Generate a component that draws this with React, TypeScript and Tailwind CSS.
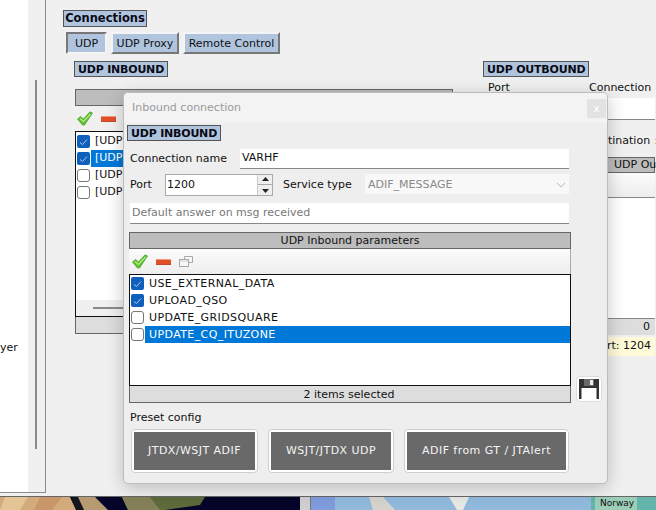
import React from "react";

const font = { fontFamily: '"DejaVu Sans", sans-serif' };

function Label({ children, className = "" }: { children: React.ReactNode; className?: string }) {
  return (
    <div className={`w-fit h-4 flex items-center px-[3px] bg-[#b0c4de] border border-[#555] font-bold text-[11px] tracking-[-0.2px] leading-none text-[#0a0a14] ${className}`}>
      {children}
    </div>
  );
}

function Tab({ children, active, className = "" }: { children: React.ReactNode; active?: boolean; className?: string }) {
  return (
    <div
      className={`h-[22px] pt-[2px] flex items-center justify-center bg-[#b0c4de] text-[11px] text-[#111] border-2 ${
        active ? "border-t-[#777] border-l-[#777] border-r-[#f4f4f4] border-b-[#f4f4f4]" : "border-t-[#f4f4f4] border-l-[#f4f4f4] border-r-[#777] border-b-[#777]"
      } ${className}`}
    >
      {children}
    </div>
  );
}

function Check() {
  return (
    <svg width="16" height="15" viewBox="0 0 16 15">
      <path d="M0.5 8 L3.5 5.5 L6.5 8 L13 0.8 L15.5 2 L7.5 14 L5.5 14 Z" fill="#62c234" stroke="#3d9a22" strokeWidth="0.7" />
      <path d="M3 7.5 L6.5 10.5 L13.5 3" fill="none" stroke="#b4ee84" strokeWidth="1.1" />
    </svg>
  );
}

function Minus() {
  return (
    <svg width="15" height="6" viewBox="0 0 15 6">
      <rect x="0" y="0" width="15" height="6" rx="0.5" fill="#e2502a" />
      <rect x="0" y="0" width="15" height="1" fill="#f09a78" />
      <rect x="0" y="5" width="15" height="1" fill="#c04a2a" />
    </svg>
  );
}

function Copy() {
  return (
    <svg width="14" height="11" viewBox="0 0 14 11" fill="none" stroke="#a8a8a8">
      <path d="M5.5 3 V0.5 H13.5 V6.5 H10" />
      <rect x="0.5" y="3.5" width="9" height="7" fill="#f6f6f6" />
      <path d="M1 5 H9" stroke="#cfcfcf" />
    </svg>
  );
}

function Box({ checked }: { checked?: boolean }) {
  return checked ? (
    <span className="w-[13px] h-[13px] rounded-[2px] bg-[#0f5fbd] flex items-center justify-center shrink-0">
      <svg width="9" height="8" viewBox="0 0 9 8">
        <path d="M1 4.5 L3.5 6.5 L8 1.5" fill="none" stroke="#a9caee" strokeWidth="1" />
      </svg>
    </span>
  ) : (
    <span className="w-[13px] h-[13px] rounded-[3px] bg-white border border-[#777] shrink-0" />
  );
}

function Row({ label, checked, selected }: { label: string; checked?: boolean; selected?: boolean }) {
  return (
    <div className="h-[17px] flex items-center pl-[1px]">
      <Box checked={checked} />
      <div className={`ml-[1px] flex-1 h-[17px] flex items-center pl-[4px] pt-[1px] tracking-[0.4px] ${selected ? "bg-[#0078d7] text-white" : "text-[#111]"}`}>{label}</div>
    </div>
  );
}

function Preset({ children, className = "" }: { children: React.ReactNode; className?: string }) {
  return (
    <div className={`h-[44px] p-[2px] rounded-[4px] border border-[#cfcfcf] bg-white ${className}`}>
      <div className="h-full bg-[#696969] text-[#f4f4f4] tracking-[0.45px] flex items-center justify-center">{children}</div>
    </div>
  );
}

function HeaderBar({ children, className = "" }: { children?: React.ReactNode; className?: string }) {
  return <div className={`bg-[#bdbdbd] border border-[#666] pt-[1px] flex items-center justify-center text-[#111] ${className}`}>{children}</div>;
}

function Dialog() {
  return (
    <div className="absolute left-[123px] top-[92px] w-[485px] h-[392px] rounded-[5px] border border-[#bcbcbc] bg-[#eeeeee] shadow-[0_4px_18px_rgba(0,0,0,0.22)] text-[11px] overflow-hidden">
      <div className="h-[30px] bg-[#f3f3f3] flex items-center justify-between pl-[8px] pr-[1px] text-[#9a9a9a]">
        <span>Inbound connection</span>
        <span className="w-[19px] h-[19px] bg-[#e2e2e2] text-white text-[10px] flex items-center justify-center">x</span>
      </div>
      <div className="ml-px">
        <div className="pl-[2px] pt-[2px]">
          <Label>UDP INBOUND</Label>
        </div>
        <div className="flex items-center pl-[5px] mt-[8px] h-[20px]">
          <span className="w-[110px] text-[#111]">Connection name</span>
          <div className="w-[329px] h-[20px] bg-white border-b border-[#888] flex items-center pl-[2px] text-[#111]">VARHF</div>
        </div>
        <div className="flex items-start pl-[5px] mt-[5px] h-[22px]">
          <span className="w-[35px] leading-[21px] text-[#111]">Port</span>
          <div className="w-[108px] h-[22px] bg-white border border-[#aaa] flex items-center justify-between pl-[1px] text-[#111]">
            <span>1200</span>
            <div className="w-[15px] h-[20px] flex flex-col border-l border-[#ccc] bg-[#eee] items-center justify-around">
              <svg width="7" height="4" viewBox="0 0 7 4"><path d="M3.5 0 L7 4 L0 4 Z" fill="#222" /></svg>
              <div className="w-full h-px bg-[#aaa]" />
              <svg width="7" height="4" viewBox="0 0 7 4"><path d="M0 0 L7 0 L3.5 4 Z" fill="#222" /></svg>
            </div>
          </div>
          <span className="w-[82px] ml-[10px] leading-[21px] text-[#111]">Service type</span>
          <div className="w-[204px] h-[20px] pt-[2px] bg-[#f8f8f8] flex items-center justify-between pl-[3px] pr-[3px] text-[#888]">
            <span>ADIF_MESSAGE</span>
            <svg width="10" height="6" viewBox="0 0 10 6"><path d="M1 1 L5 5 L9 1" fill="none" stroke="#b5b5b5" /></svg>
          </div>
        </div>
        <div className="ml-[5px] mt-[7px] w-[439px] h-[21px] bg-white border-b border-[#888] flex items-center pl-[2px] text-[#777]">
          Default answer on msg received
        </div>
        <HeaderBar className="ml-[4px] mt-[8px] w-[442px] h-[17px]">UDP Inbound parameters</HeaderBar>
        <div className="ml-[4px] w-[442px] h-[25px] flex items-center pl-[3px] bg-gradient-to-b from-[#fbfbfb] to-[#eeeeee] border-r border-[#aaa]">
          <Check />
          <span className="ml-[8px] flex"><Minus /></span>
          <span className="ml-[8px] flex"><Copy /></span>
        </div>
        <div className="ml-[4px] w-[442px] flex">
          <div className="w-full">
            <div className="h-[112px] bg-white border border-[#111]">
              <Row label="USE_EXTERNAL_DATA" checked />
              <Row label="UPLOAD_QSO" checked />
              <Row label="UPDATE_GRIDSQUARE" />
              <Row label="UPDATE_CQ_ITUZONE" selected />
            </div>
            <div className="h-[17px] pt-[2px] pr-[2px] bg-[#dddddd] border-b border-l border-r border-[#666] flex items-center justify-center text-[#111]">2 items selected</div>
          </div>
          <div className="relative">
            <div className="absolute left-[5px] top-[102px] w-[26px] h-[26px] rounded-[4px] border border-[#ddd] bg-white flex items-center justify-center">
              <svg width="20" height="20" viewBox="0 0 20 20">
                <path d="M0 0 H20 V20 H0 Z" fill="#333" />
                <rect x="5" y="0" width="10" height="7" fill="#6a6a6a" />
                <rect x="11" y="1" width="3" height="5" fill="#eee" />
                <rect x="2.5" y="9" width="15" height="11" fill="#fff" />
              </svg>
            </div>
          </div>
        </div>
        <div className="pl-[5px] mt-[7px] h-[16px] flex items-center text-[#111]">Preset config</div>
        <div className="flex ml-[6px] mt-[3px]">
          <Preset className="w-[127px]">JTDX/WSJT ADIF</Preset>
          <Preset className="w-[126px] ml-[10px]">WSJT/JTDX UDP</Preset>
          <Preset className="w-[165px] ml-[10px]">ADIF from GT / JTAlert</Preset>
        </div>
      </div>
    </div>
  );
}

export default function App() {
  return (
    <div className="relative w-[656px] h-[510px] overflow-hidden flex flex-col bg-[#f0f0f0]" style={font}>
      <div className="h-[496px] flex">
        <div className="w-[46px] h-[493px] flex border-r border-b border-[#8a8a8a] bg-white">
          <div className="w-[28px] text-[11px] text-[#111] pt-[340px]">
            <span>yer</span>
          </div>
          <div className="w-[17px] bg-[#f0f0f0] pl-[7px] pt-[80px]">
            <div className="w-[2px] h-[369px] bg-[#8a8a8a]" />
          </div>
        </div>
        <div className="flex-1 pl-[17px] pt-[10px] text-[11px]">
          <div className="w-[84px] h-[17px] flex items-center justify-center bg-[#b0c4de] border border-[#555] font-bold text-[11.5px] leading-none text-[#0a0a14]">Connections</div>
          <div className="flex gap-[4px] mt-[5px] ml-[3px]">
            <Tab active className="w-[41px]">UDP</Tab>
            <Tab className="w-[68px]">UDP Proxy</Tab>
            <Tab className="w-[97px]">Remote Control</Tab>
          </div>
          <div className="flex mt-[7px] ml-[11px]">
            <div className="w-[410px] shrink-0">
              <Label>UDP INBOUND</Label>
              <HeaderBar className="ml-[1px] mt-[12px] w-[378px] h-[17px]" />
              <div className="ml-[1px] w-[378px] h-[25px] flex items-center pl-[2px]">
                <Check />
                <span className="ml-[8px] flex"><Minus /></span>
              </div>
              <div className="ml-[1px] w-[378px] h-[186px] bg-white border border-[#111] flex flex-col">
                <div className="flex-1 pt-[1px]">
                  {["checked", "sel", "", ""].map((k, i) => (
                    <div key={i} className="h-[17px] flex items-center pl-[1px]">
                      <Box checked={k === "checked" || k === "sel"} />
                      <div className={`ml-[1px] w-[40px] pl-[4px] h-[17px] flex items-center ${k === "sel" ? "bg-[#0078d7] text-white" : "text-[#111]"}`}>[UDP]</div>
                    </div>
                  ))}
                </div>
                <div className="h-[16px] bg-[#f0f0f0] flex items-center pl-[17px]">
                  <div className="w-[60px] h-[2px] bg-[#8a8a8a]" />
                </div>
              </div>
              <div className="ml-[1px] w-[378px] h-[17px] bg-[#dddddd] border-b border-l border-r border-[#666]" />
            </div>
            <div className="w-[172px] -ml-[1px] shrink-0">
              <Label>UDP OUTBOUND</Label>
              <div className="flex ml-[5px] text-[#111] h-[20px] items-center mt-[1px]">
                <span className="w-[101px]">Port</span>
                <span>Connection</span>
              </div>
              <div className="ml-[5px] h-[22px] bg-white border-b border-[#888]" />
              <div className="h-[18px] mt-[12px] ml-[104px] text-[#111] flex items-center whitespace-nowrap gap-[4px]">
                <span>Destination</span>
                <span className="text-[#c9822a]">:</span>
              </div>
              <div className="h-[16px] mt-[7px] ml-[5px] bg-[#bdbdbd] border border-[#666] whitespace-nowrap pl-[125px] flex items-center text-[#111]">UDP Ou</div>
              <div className="h-[25px] ml-[5px] bg-gradient-to-b from-[#fbfbfb] to-[#eeeeee] border-b border-[#888]" />
              <div className="h-[120px] ml-[5px] bg-white" />
              <div className="h-[17px] ml-[5px] bg-[#dddddd] border-t border-[#888] flex items-center justify-end pr-[5px] text-[#111]">0</div>
              <div className="h-[19px] ml-[5px] mt-[2px] bg-[#fffbd9] flex items-center justify-end pr-[4px] whitespace-nowrap text-[#111]">port: 1204</div>
            </div>
          </div>
        </div>
      </div>
      <div className="h-[14px] flex border-t border-[#666]">
        <svg width="300" height="13" viewBox="0 0 300 13" preserveAspectRatio="none">
          <rect width="300" height="13" fill="#05052a" />
          <path d="M0 0 H70 L76 13 H0 Z" fill="#d2ab7a" />
          <path d="M5 0 H28 L20 13 H0 Z" fill="#e3c596" />
          <path d="M40 0 H62 L52 13 H34 Z" fill="#c9966a" />
          <path d="M70 0 H78 L84 13 H77 Z" fill="#15151f" />
          <path d="M78 0 H95 L108 13 H84 Z" fill="#b59a72" />
          <path d="M122 0 H205 L200 8 L165 13 H128 Z" fill="#5d6a3a" />
          <path d="M122 0 H150 L160 13 H128 Z" fill="#84805a" />
        </svg>
        <div className="w-[11px] bg-[#cfcfcf] border-r border-[#777]" />
        <svg width="345" height="13" viewBox="0 0 345 13" preserveAspectRatio="none">
          <rect width="345" height="13" fill="#90b9dc" />
          <path d="M0 0 H24 V13 H0 Z" fill="#7f9cdc" />
          <path d="M58 0 H72 L84 13 H62 Z" fill="#d4d4cc" />
          <path d="M138 0 H158 L152 13 H146 Z" fill="#e6e8e6" />
          <path d="M280 0 H345 V13 H280 Z" fill="#63b5ab" />
          <path d="M284 0 H326 V13 H284 Z" fill="#9ccdb8" />
        </svg>
      </div>
      <span className="absolute left-[600px] top-[499px] text-[9px] font-medium text-[#111] leading-none">Norway</span>
      <Dialog />
    </div>
  );
}
